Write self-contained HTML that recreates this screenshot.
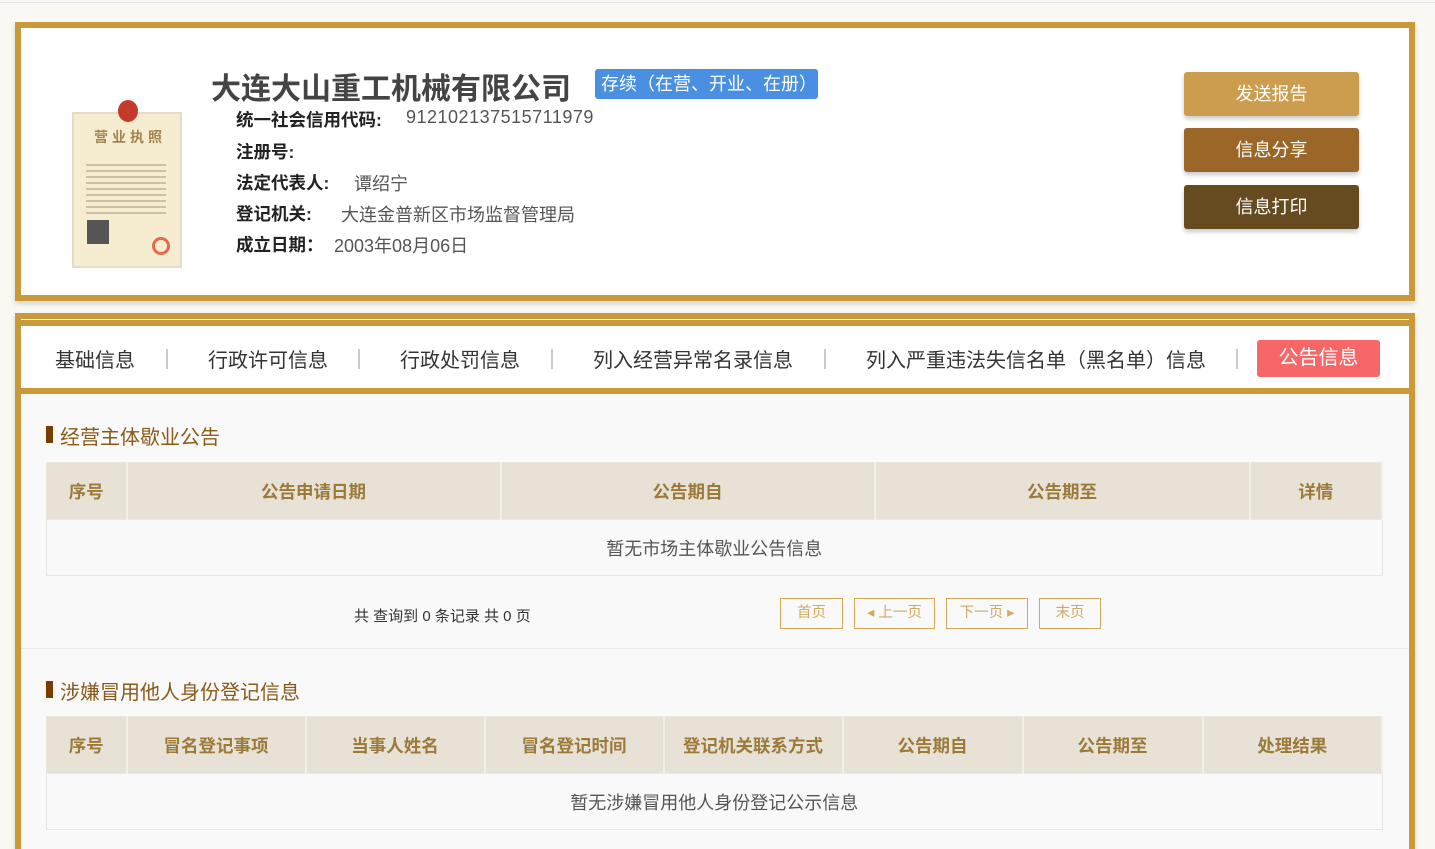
<!DOCTYPE html>
<html><head><meta charset="utf-8"><style>
*{margin:0;padding:0;box-sizing:border-box}
body{width:1435px;height:849px;overflow:hidden;background:#faf8f2;font-family:"Liberation Sans","Noto Sans CJK SC",sans-serif;position:relative}
.a{position:absolute;white-space:nowrap}
.card1{left:15px;top:22px;width:1400px;height:279px;border:6px solid #c9993a;background:#fff;box-shadow:0 3px 5px rgba(0,0,0,.15)}
.lbl{font-size:17.5px;font-weight:bold;color:#222}
.val{font-size:18px;color:#555}
.btn{left:1184px;width:175px;height:44px;border-radius:3px;color:#fff;font-size:18px;text-align:center;line-height:44px;box-shadow:0 3px 4px rgba(0,0,0,.2)}
.tab{font-size:20px;color:#333;top:344px}
.sep{width:2px;height:20px;background:#ccc;top:349px}
.st{font-size:20px;color:#8a5a1a}
.bar{width:7px;height:17px;background:#7a3d00}
table{position:absolute;left:46px;border-collapse:collapse;width:1337px}
th{background:#e8e1d5;color:#9b7a3a;font-size:17.5px;height:57px;border:1px solid #ece6db;border-right:2px solid #f3efe8}
td{height:56px;border:1px solid #e6e6e6;text-align:center;font-size:18px;color:#555;background:#f9f9f9}
.pb{top:598px;height:31px;border:1px solid #d4a85a;color:#d0aa66;font-size:14.5px;text-align:center;line-height:29px}
</style></head><body>
<div class="a" style="left:0;top:2px;width:1435px;height:1px;background:#e3e3e3"></div>
<div class="a card1"></div>
<div class="a" style="left:72px;top:112px;width:110px;height:156px;background:#f6ecd0;border:2px solid #e2dcca"></div>
<div class="a" style="left:118px;top:100px;width:20px;height:22px;border-radius:50%;background:#c43b2b"></div>
<div class="a" style="left:94px;top:127px;font-size:14px;color:#a08550;font-weight:bold;letter-spacing:4px">营业执照</div>
<div class="a" style="left:86px;top:160px;width:80px;height:55px;background:repeating-linear-gradient(#f6ecd0 0 4px,#cdbfa3 4px 6px)"></div>
<div class="a" style="left:87px;top:220px;width:22px;height:24px;background:#555"></div>
<div class="a" style="left:152px;top:237px;width:18px;height:18px;border-radius:50%;border:3px solid #e46a50"></div>
<div class="a" style="left:211px;top:64px;font-size:30px;font-weight:bold;color:#444">大连大山重工机械有限公司</div>
<div class="a" style="left:595px;top:69px;width:223px;height:30px;background:#4a90e2;border-radius:3px;color:#fff;font-size:18px;line-height:30px;padding-left:6px">存续（在营、开业、在册）</div>
<div class="a lbl" style="left:236px;top:107px">统一社会信用代码:</div><div class="a val" style="left:406px;top:107px;letter-spacing:0.5px">912102137515711979</div>
<div class="a lbl" style="left:236px;top:139px">注册号:</div>
<div class="a lbl" style="left:236px;top:170px">法定代表人:</div><div class="a val" style="left:354px;top:170px">谭绍宁</div>
<div class="a lbl" style="left:236px;top:201px">登记机关:</div><div class="a val" style="left:341px;top:201px">大连金普新区市场监督管理局</div>
<div class="a lbl" style="left:236px;top:232px">成立日期：</div><div class="a val" style="left:334px;top:232px">2003年08月06日</div>
<div class="a btn" style="top:72px;background:#cc9d4e">发送报告</div>
<div class="a btn" style="top:128px;background:#9a6728">信息分享</div>
<div class="a btn" style="top:185px;background:#654b1f">信息打印</div>

<div class="a" style="left:15px;top:313px;width:1400px;height:536px;border:6px solid #c9993a;border-bottom:none;background:#f9f9f9;box-shadow:0 3px 5px rgba(0,0,0,.15)"></div>
<div class="a" style="left:21px;top:319px;width:1388px;height:1px;background:#fff"></div>
<div class="a" style="left:21px;top:320px;width:1388px;height:6px;background:#c9993a"></div>
<div class="a" style="left:21px;top:326px;width:1388px;height:62px;background:#fff"></div>
<div class="a" style="left:21px;top:388px;width:1388px;height:6px;background:#c9993a"></div>
<div class="a tab" style="left:55px">基础信息</div><div class="a sep" style="left:166px"></div>
<div class="a tab" style="left:208px">行政许可信息</div><div class="a sep" style="left:358px"></div>
<div class="a tab" style="left:400px">行政处罚信息</div><div class="a sep" style="left:551px"></div>
<div class="a tab" style="left:593px">列入经营异常名录信息</div><div class="a sep" style="left:824px"></div>
<div class="a tab" style="left:866px">列入严重违法失信名单（黑名单）信息</div><div class="a sep" style="left:1236px"></div>
<div class="a" style="left:1257px;top:340px;width:123px;height:37px;background:#f76767;border-radius:3px;color:#fff;font-size:20px;text-align:center;line-height:37px">公告信息</div>

<div class="a bar" style="left:46px;top:426px"></div><div class="a st" style="left:60px;top:421px">经营主体歇业公告</div>
<table style="top:462px"><tr><th style="width:80px">序号</th><th style="width:374px">公告申请日期</th><th style="width:374px">公告期自</th><th style="width:375px">公告期至</th><th>详情</th></tr>
<tr><td colspan="5">暂无市场主体歇业公告信息</td></tr></table>
<div class="a" style="left:354px;top:605px;font-size:15px;color:#333">共 查询到 0 条记录 共 0 页</div>
<div class="a pb" style="left:780px;width:63px">首页</div>
<div class="a pb" style="left:854px;width:81px">◂ 上一页</div>
<div class="a pb" style="left:946px;width:82px">下一页 ▸</div>
<div class="a pb" style="left:1039px;width:62px">末页</div>
<div class="a" style="left:21px;top:648px;width:1388px;height:1px;background:#ebebeb"></div>

<div class="a bar" style="left:46px;top:681px"></div><div class="a st" style="left:60px;top:676px">涉嫌冒用他人身份登记信息</div>
<table style="top:716px"><tr><th style="width:80px">序号</th><th style="width:179px">冒名登记事项</th><th style="width:179px">当事人姓名</th><th style="width:179px">冒名登记时间</th><th style="width:179px">登记机关联系方式</th><th style="width:180px">公告期自</th><th style="width:180px">公告期至</th><th>处理结果</th></tr>
<tr><td colspan="8">暂无涉嫌冒用他人身份登记公示信息</td></tr></table>
</body></html>
